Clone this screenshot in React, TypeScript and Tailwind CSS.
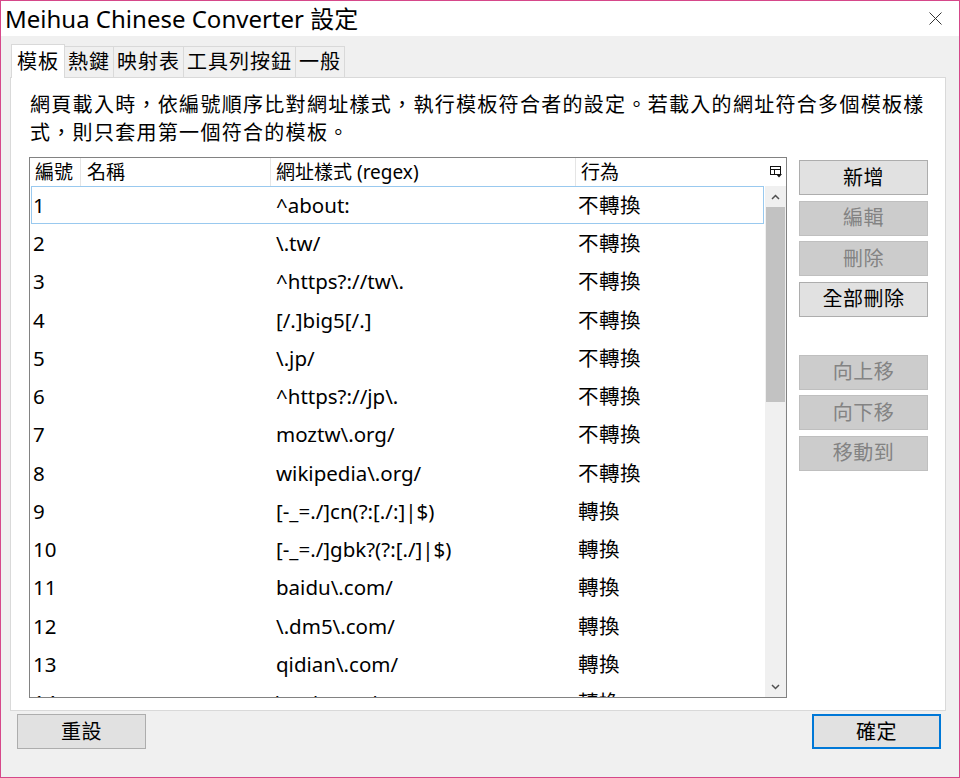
import React from 'react';

const font = { fontFamily: '"Noto Sans", "Noto Sans CJK TC", sans-serif' };

const rows: [string, string, string][] = [
  ['1', '^about:', '不轉換'],
  ['2', '\\.tw/', '不轉換'],
  ['3', '^https?://tw\\.', '不轉換'],
  ['4', '[/.]big5[/.]', '不轉換'],
  ['5', '\\.jp/', '不轉換'],
  ['6', '^https?://jp\\.', '不轉換'],
  ['7', 'moztw\\.org/', '不轉換'],
  ['8', 'wikipedia\\.org/', '不轉換'],
  ['9', '[-_=./]cn(?:[./:]|$)', '轉換'],
  ['10', '[-_=./]gbk?(?:[./]|$)', '轉換'],
  ['11', 'baidu\\.com/', '轉換'],
  ['12', '\\.dm5\\.com/', '轉換'],
  ['13', 'qidian\\.com/', '轉換'],
  ['14', '\\.qq\\.com/', '轉換'],
];

const tabs = ['模板', '熱鍵', '映射表', '工具列按鈕', '一般'];

function SideButton({ label, disabled }: { label: string; disabled?: boolean }) {
  return (
    <div
      className={
        'h-[35px] w-[129px] flex items-center justify-center text-[20px] tracking-[0.5px] border ' +
        (disabled ? 'bg-[#cccccc] border-[#bfbfbf] text-[#838383]' : 'bg-[#e1e1e1] border-[#adadad] text-black')
      }
    >
      {label}
    </div>
  );
}

export default function App() {
  return (
    <div style={font} className="w-[960px] h-[778px] border border-[#d6488a] bg-[#f0f0f0] flex flex-col overflow-hidden text-black">
      {/* title bar */}
      <div className="h-[35px] bg-white flex items-center justify-between pl-[4px] pr-[17px] shrink-0">
        <span className="text-[24px] leading-none">Meihua Chinese Converter 設定</span>
        <svg width="13" height="13" viewBox="0 0 13 13">
          <path d="M0.5 0.5 L12.5 12.5 M12.5 0.5 L0.5 12.5" stroke="#333" strokeWidth="1" />
        </svg>
      </div>

      <div className="pl-[9px] pr-[13px] pt-[8px] flex flex-col">
        {/* tabs */}
        <div className="flex items-end h-[33px] pl-[1px]">
          {tabs.map((t, i) =>
            i === 0 ? (
              <div key={t} className="h-[34px] px-[5px] bg-white border border-b-0 border-[#d9d9d9] flex items-center text-[20px] tracking-[1px] relative z-10 -mb-px">
                {t}
              </div>
            ) : (
              <div key={t} className="h-[31px] px-[3px] bg-[#f0f0f0] border border-l-0 border-b-0 border-[#d9d9d9] flex items-center text-[20px] tracking-[1px]">
                {t}
              </div>
            )
          )}
        </div>

        {/* panel */}
        <div className="h-[634px] bg-white border border-[#d9d9d9] pl-[18px] pr-[17px] pt-[13px] flex flex-col">
          <p className="text-[20px] leading-[28px] tracking-[1.3px] pl-[1px] whitespace-nowrap">
            網頁載入時，依編號順序比對網址樣式，執行模板符合者的設定。若載入的網址符合多個模板樣
            <br />
            式，則只套用第一個符合的模板。
          </p>
          <div className="flex gap-[12px] mt-[10px]">
            {/* table */}
            <div className="w-[758px] h-[541px] border border-[#828282] flex flex-col overflow-hidden">
              <div className="h-[28px] flex shrink-0 text-[19px] leading-none">
                <div className="w-[51px] pl-[5px] border-r border-[#e5e5e5] flex items-center">編號</div>
                <div className="w-[190px] pl-[6px] border-r border-[#e5e5e5] flex items-center">名稱</div>
                <div className="w-[305px] pl-[5px] border-r border-[#e5e5e5] flex items-center">網址樣式 (regex)</div>
                <div className="w-[190px] pl-[5px] flex items-center">行為</div>
                <div className="flex-1 flex items-center justify-center">
                  <svg width="12" height="12" viewBox="0 0 12 12">
                    <rect x="0.5" y="0.5" width="10" height="8" fill="none" stroke="#111" />
                    <path d="M0.5 3.5 H10.5 M4.5 3.5 V8.5" stroke="#111" />
                    <path d="M6 8 H12 L9 11.5 Z" fill="#111" />
                  </svg>
                </div>
              </div>
              <div className="flex flex-1 min-h-0">
                <div className="flex-1 overflow-hidden">
                  {rows.map(([n, pat, act], i) => (
                    <div
                      key={n}
                      className={
                        'h-[38.25px] flex items-center text-[20.5px] leading-none border mx-[1px] ' +
                        (i === 0 ? 'border-[#99c9ef]' : 'border-transparent')
                      }
                    >
                      <div className="w-[241px] pl-[1px]">{n}</div>
                      <div className="w-[305px] pl-[3px]">{pat}</div>
                      <div className="pl-[0px] tracking-[0.5px]">{act}</div>
                    </div>
                  ))}
                </div>
                {/* scrollbar */}
                <div className="w-[21px] bg-[#f0f0f0] flex flex-col shrink-0">
                  <div className="h-[21px] flex items-center justify-center">
                    <svg width="9" height="6" viewBox="0 0 9 6">
                      <path d="M1 5 L4.5 1.5 L8 5" fill="none" stroke="#505050" strokeWidth="1.5" />
                    </svg>
                  </div>
                  <div className="h-[195px] mx-[1px] bg-[#c2c2c2]" />
                  <div className="flex-1" />
                  <div className="h-[21px] flex items-center justify-center">
                    <svg width="9" height="6" viewBox="0 0 9 6">
                      <path d="M1 1 L4.5 4.5 L8 1" fill="none" stroke="#505050" strokeWidth="1.5" />
                    </svg>
                  </div>
                </div>
              </div>
            </div>

            {/* side buttons */}
            <div className="flex flex-col gap-[5.5px] pt-[3px]">
              <SideButton label="新增" />
              <SideButton label="編輯" disabled />
              <SideButton label="刪除" disabled />
              <SideButton label="全部刪除" />
              <div className="h-[27px]" />
              <SideButton label="向上移" disabled />
              <SideButton label="向下移" disabled />
              <SideButton label="移動到" disabled />
            </div>
          </div>
        </div>
      </div>

      {/* bottom buttons */}
      <div className="flex justify-between pl-[16px] pr-[18px] pt-[3px]">
        <div className="h-[35px] w-[129px] bg-[#e1e1e1] border border-[#adadad] flex items-center justify-center text-[20px] tracking-[0.5px]">重設</div>
        <div className="h-[35px] w-[129px] bg-[#e1e1e1] border-2 border-[#0078d7] flex items-center justify-center text-[20px] tracking-[0.5px]">確定</div>
      </div>
    </div>
  );
}
